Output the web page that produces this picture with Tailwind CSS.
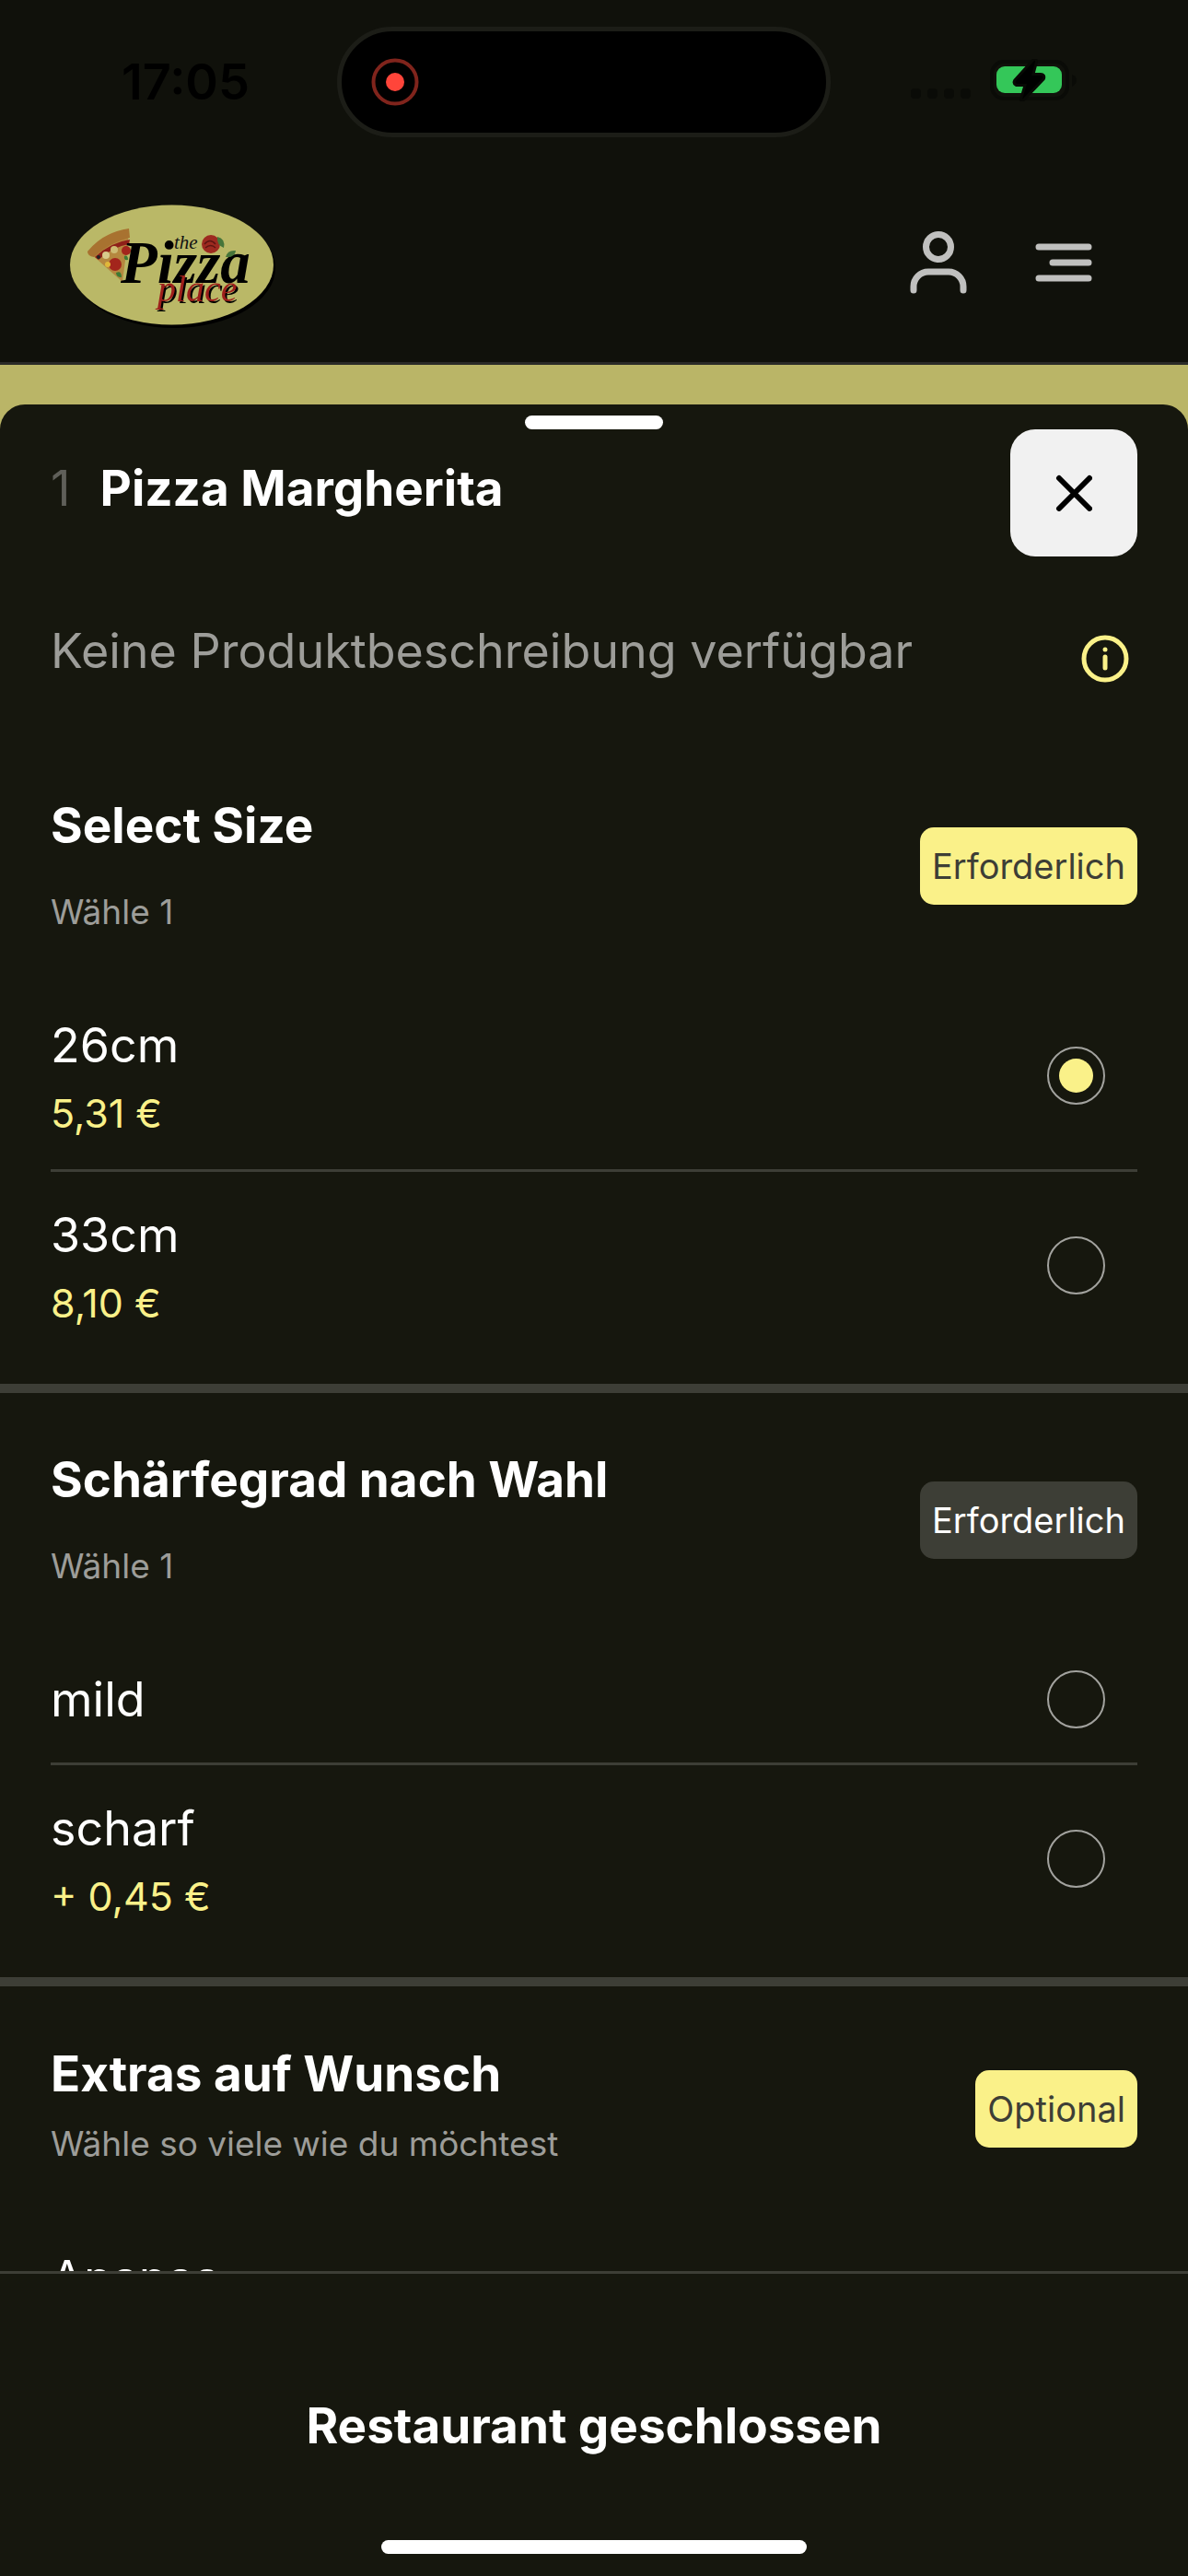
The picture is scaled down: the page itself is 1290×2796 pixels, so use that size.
<!DOCTYPE html>
<html lang="de">
<head>
<meta charset="utf-8">
<meta name="viewport" content="width=device-width, initial-scale=1">
<title>Pizza Margherita – The Pizza Place</title>
<script src="https://cdn.jsdelivr.net/npm/@tailwindcss/browser@4"></script>
</head>
<body class="flex h-dvh flex-col overflow-hidden bg-[#bab567] font-[Inter,'Noto_Sans',sans-serif] text-white">

<!-- Status bar and shop header -->
<header class="shrink-0 border-b-3 border-[#2b2b28] bg-[#10110b]">
  <div class="grid h-[178px] grid-cols-[366fr_536fr_388fr] items-center">
    <time class="pl-[132px] text-[54px] leading-none font-semibold text-black">17:05</time>
    <div class="flex h-[120px] items-center rounded-full border-5 border-[#1c1d17] bg-black pl-8" aria-label="Aufnahme">
      <svg class="size-[52px]" viewBox="0 0 52 52" fill="none"><circle cx="26" cy="26" r="23.5" stroke="#80241c" stroke-width="4"/><circle cx="26" cy="26" r="10" fill="#ff453a"/></svg>
    </div>
    <div class="flex items-center justify-end gap-5 pr-[121px] pb-1">
      <svg class="mt-7 h-3 w-[66px]" viewBox="0 0 66 12" fill="#0a0b07"><rect width="11" height="11" y="1" rx="4"/><rect x="18" width="11" height="11" y="1" rx="4"/><rect x="36" width="11" height="11" y="1" rx="4"/><rect x="54" width="11" height="11" y="1" rx="4"/></svg>
      <svg class="h-[46px] w-[94px]" viewBox="0 0 94 46" fill="none"><rect x="2" y="3" width="82" height="40" rx="13" stroke="#0a0b07" stroke-width="4"/><path d="M89 17q5 2 5 6t-5 7z" fill="#0a0b07"/><rect x="7" y="8" width="71" height="29" rx="9" fill="#34c759"/><path d="M48 2 28 24q-1 2 1 3h11l-5 17 22-23q1-3-2-3H45l4-15q0-2-1-1z" fill="#000" stroke="#080905" stroke-width="6" stroke-linejoin="round"/><path d="M48 2 28 24q-1 2 1 3h11l-5 17 22-23q1-3-2-3H45l4-15q0-2-1-1z" fill="#000"/></svg>
    </div>
  </div>
  <div class="flex h-[215px] items-center justify-between pr-[99px] pb-[2px] pl-[74px]">
    <a href="#" aria-label="The Pizza Place" class="mt-[10px]">
      <svg class="h-[135px] w-[228px]" viewBox="0 0 228 135">
        <ellipse cx="115" cy="69" rx="110" ry="65" fill="#000"/>
        <ellipse cx="112.500" cy="65.500" rx="110.500" ry="65" fill="#bab867"/>
        <path d="M24 53Q38 34 66 30L59 84Z" fill="#b5883f"/>
        <path d="M21 51Q38 30 66 26L67 36Q45 41 28 57Q21 56 21 51Z" fill="#a87230"/>
        <path d="M29 57Q46 41 67 38L66 43Q48 46 33 60Z" fill="#8f2019"/>
        <circle cx="51" cy="65" r="7" fill="#a3251c"/><circle cx="63" cy="50" r="5" fill="#a3251c"/><circle cx="41" cy="55" r="4" fill="#d8ca8c"/><circle cx="50" cy="49" r="4" fill="#cdbb73"/><circle cx="43" cy="65" r="3" fill="#e0b83a"/><circle cx="33" cy="57" r="2" fill="#222"/><path d="M52 74q6-3 6 5q-6 0-6-5M61 56q4-2 4 4q-5 1-4-4" fill="#3d7a34"/>
        <circle cx="155" cy="43" r="10" fill="#9d2a20"/><path d="M148 43q6-7 12 0M149 47q6-5 11 0" stroke="#5c1511" stroke-width="1.500" fill="none"/>
        <text x="57" y="85" font-family="Liberation Serif, serif" font-size="65" font-weight="700" font-style="italic" fill="#000">Pizza</text>
        <path d="M162 35q9 2 7 12q-8-3-7-12M171 57q2-8 11-7q-1 8-11 7" fill="#47753a"/>
        <text x="115" y="48" font-family="Liberation Serif, serif" font-size="21" font-style="italic" fill="#111">the</text>
        <text x="97" y="105" class="drop-shadow-[2px_2px_0_#000]" font-family="Liberation Serif, serif" font-size="40" font-style="italic" fill="#9d1f1b">place</text>
      </svg>
    </a>
    <nav class="flex items-center gap-[64px]" aria-label="Hauptmenü">
      <button type="button" aria-label="Konto"><svg class="h-[72px] w-[72px]" viewBox="0 0 72 72" fill="none" stroke="#c0c0bf" stroke-width="7" stroke-linecap="round"><circle cx="36" cy="19" r="13.500"/><path d="M9 66v-4a16 16 0 0 1 16-16h22a16 16 0 0 1 16 16v4"/></svg></button>
      <button type="button" aria-label="Menü"><svg class="h-[72px] w-[72px]" viewBox="0 0 72 72" fill="none" stroke="#c0c0bf" stroke-width="7" stroke-linecap="round"><path d="M9 19h54M24 36h39M9 53h54"/></svg></button>
    </nav>
  </div>
</header>

<!-- Product sheet -->
<main class="mt-[43px] flex min-h-0 grow flex-col rounded-t-[27px] bg-[#16170e]">
  <div class="mx-auto mt-3 h-[15px] w-[150px] shrink-0 rounded-full bg-white"></div>
  <div class="flex shrink-0 items-center justify-between px-[55px]">
    <h1 class="flex items-baseline gap-8 pb-[10px] text-[53px] leading-[66px] font-bold"><span class="font-normal text-[#5f5f59]">1</span>Pizza Margherita</h1>
    <button type="button" aria-label="Schließen" class="flex size-[138px] items-center justify-center rounded-[27px] bg-[#f1f1f1]">
      <svg class="size-10" viewBox="0 0 40 40" fill="none" stroke="#000" stroke-width="6" stroke-linecap="round"><path d="M4 4 37 37M37 4 4 37"/></svg>
    </button>
  </div>

  <div class="min-h-0 grow overflow-hidden">
    <div class="flex items-start justify-between px-[55px] pt-[70px] pb-[121px]">
      <p class="text-[52px] leading-[66px] text-[#9d9d99]">Keine Produktbeschreibung verfügbar</p>
      <button type="button" aria-label="Produktinformationen" class="mt-[14px] mr-2"><svg class="size-[54px]" viewBox="0 0 54 54" fill="none" stroke="#faf189" stroke-width="5" stroke-linecap="round"><circle cx="27" cy="27" r="23"/><path d="M27 25v12"/><circle cx="27" cy="17" r="2.500" fill="#faf189" stroke="none"/></svg></button>
    </div>

    <fieldset class="border-b-10 border-[#3d3e36] px-[55px] pb-[27px]">
      <div class="flex items-center justify-between pb-[49px]">
        <div>
          <h2 class="text-[53px] leading-[66px] font-bold">Select Size</h2>
          <p class="mt-[34px] text-[37px] leading-[54px] text-[#9d9d99]">Wähle 1</p>
        </div>
        <span class="rounded-[15px] bg-[#faf189] px-[13px] py-[15px] text-[38px] leading-[54px] text-[#3d3e36]">Erforderlich</span>
      </div>
      <label class="flex h-[206px] items-center justify-between border-b-3 border-[#3d3e36] pr-[35px]">
        <span class="pt-1"><span class="block text-[52px] leading-[72px]">26cm</span><span class="mt-1 block text-[43px] leading-[66px] text-[#faf189]">5,31 €</span></span>
        <input type="radio" name="size" checked class="size-[63px] appearance-none rounded-full border-2 border-[#a2a29e] bg-clip-content p-[11px] checked:bg-[#faf189]">
      </label>
      <label class="flex h-[203px] items-center justify-between pr-[35px]">
        <span class="pt-1"><span class="block text-[52px] leading-[72px]">33cm</span><span class="mt-1 block text-[43px] leading-[66px] text-[#faf189]">8,10 €</span></span>
        <input type="radio" name="size" class="size-[63px] appearance-none rounded-full border-2 border-[#a2a29e] bg-clip-content p-[11px] checked:bg-[#faf189]">
      </label>
    </fieldset>

    <fieldset class="border-b-10 border-[#3d3e36] px-[55px] pt-[61px] pb-[27px]">
      <div class="flex items-center justify-between pb-[49px]">
        <div>
          <h2 class="text-[53px] leading-[66px] font-bold">Schärfegrad nach Wahl</h2>
          <p class="mt-[34px] text-[37px] leading-[54px] text-[#9d9d99]">Wähle 1</p>
        </div>
        <span class="rounded-[15px] bg-[#3d3e36] px-[13px] py-[15px] text-[38px] leading-[54px]">Erforderlich</span>
      </div>
      <label class="flex h-[140px] items-center justify-between border-b-3 border-[#3d3e36] pr-[35px]">
        <span class="text-[52px] leading-[72px]">mild</span>
        <input type="radio" name="heat" class="size-[63px] appearance-none rounded-full border-2 border-[#a2a29e] bg-clip-content p-[11px] checked:bg-[#faf189]">
      </label>
      <label class="flex h-[203px] items-center justify-between pr-[35px]">
        <span class="pt-1"><span class="block text-[52px] leading-[72px]">scharf</span><span class="mt-1 block text-[43px] leading-[66px] text-[#faf189]">+ 0,45 €</span></span>
        <input type="radio" name="heat" class="size-[63px] appearance-none rounded-full border-2 border-[#a2a29e] bg-clip-content p-[11px] checked:bg-[#faf189]">
      </label>
    </fieldset>

    <fieldset class="px-[55px] pt-[62px]">
      <div class="flex items-center justify-between pb-[49px]">
        <div class="pb-[6px]">
          <h2 class="text-[53px] leading-[66px] font-bold">Extras auf Wunsch</h2>
          <p class="mt-4 text-[37px] leading-[54px] text-[#9d9d99]">Wähle so viele wie du möchtest</p>
        </div>
        <span class="rounded-[15px] bg-[#faf189] px-[13px] py-[15px] text-[38px] leading-[54px] text-[#3d3e36]">Optional</span>
      </div>
      <label class="flex h-[206px] items-start justify-between pt-[28px] pr-[35px]">
        <span class="block text-[52px] leading-[72px]">Ananas</span>
        <input type="checkbox" name="extra" class="size-[63px] appearance-none self-end border-2 border-[#a2a29e] checked:bg-[#faf189]">
      </label>
    </fieldset>
  </div>

  <!-- Order bar -->
  <footer class="flex h-[331px] shrink-0 flex-col items-center justify-between border-t-3 border-[#3d3e36] pb-6">
    <p class="pt-[132px] text-[53px] leading-[66px] font-bold">Restaurant geschlossen</p>
    <div class="h-[15px] w-[462px] rounded-full bg-white"></div>
  </footer>
</main>
</body>
</html>
